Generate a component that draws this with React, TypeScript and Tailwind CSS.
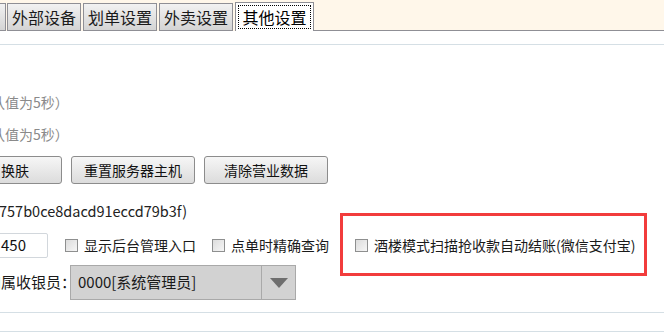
import React from 'react';

const font = { fontFamily: '"Microsoft YaHei", "Noto Sans CJK SC", "Liberation Sans", sans-serif' };

const Tab: React.FC<{ label: string; active?: boolean; className?: string }> = ({ label, active = false, className = '' }) => (
    <div
        className={`h-[28px] flex items-center justify-center text-[16px] leading-none border border-[#8f8f95] ${
            active
                ? 'h-[29px] bg-white border-b-0 text-black'
                : 'bg-gradient-to-b from-[#f2f2f2] to-[#d4d4d4] text-[#1a1a1a] mr-[2px]'
        } ${className}`}
    >
        {active ? (
            <span className="border border-dotted border-black px-[3px] py-[3px]">{label}</span>
        ) : (
            <span>{label}</span>
        )}
    </div>
);

const Button: React.FC<{ label: string; className?: string }> = ({ label, className = '' }) => (
    <button
        className={`h-[28px] rounded-[3px] border border-[#8c8c8c] bg-gradient-to-b from-[#f6f6f6] to-[#dcdcdc] text-[14px] text-[#111] flex items-center justify-center ${className}`}
    >
        {label}
    </button>
);

const Checkbox: React.FC<{ label: string }> = ({ label }) => (
    <label className="flex items-center text-[14px] text-[#1a1a1a] whitespace-nowrap">
        <span className="w-[13px] h-[13px] border border-[#8e8f8f] bg-gradient-to-br from-[#dcdcdc] to-[#f6f6f6] mr-[6px] inline-block"></span>
        <span>{label}</span>
    </label>
);

export default function App() {
    return (
        <div className="w-[664px] h-[333px] bg-white overflow-hidden relative" style={font}>
            {/* tab strip */}
            <div className="h-[31px] bg-[#fff7ea] flex items-end">
                <div className="w-[6px] h-[28px] bg-gradient-to-b from-[#f2f2f2] to-[#d4d4d4] border border-l-0 border-[#8f8f95] mr-[1px]"></div>
                <Tab label="外部设备" className="w-[74px]" />
                <Tab label="划单设置" className="w-[74px]" />
                <Tab label="外卖设置" className="w-[74px]" />
                <Tab label="其他设置" active className="w-[79px]" />
                <div className="flex-1 h-full border-b border-[#8f8f95]"></div>
            </div>

            <div className="mt-[13px] border-t border-[#d5dfe5]"></div>

            <div className="pt-[49px] text-[14px] text-[#8a8a8a] leading-[16px] ml-[-9px] whitespace-nowrap">认值为5秒）</div>
            <div className="pt-[16px] text-[14px] text-[#8a8a8a] leading-[16px] ml-[-9px] whitespace-nowrap">认值为5秒）</div>

            <div className="mt-[14px] flex gap-[9px] ml-[-40px]">
                <Button label="换肤" className="w-[102px] justify-start pl-[40px]" />
                <Button label="重置服务器主机" className="w-[124px]" />
                <Button label="清除营业数据" className="w-[124px]" />
            </div>

            <div className="mt-[17px] text-[14.5px] text-[#222] leading-[20px] ml-[-1px]">757b0ce8dacd91eccd79b3f)</div>

            <div className="mt-[12px] flex items-center ml-[-30px]">
                <div className="w-[78px] h-[25px] border border-[#d2d7dc] rounded-[2px] flex items-center pl-[30px] text-[15px] text-[#111]">450</div>
                <div className="ml-[17px]">
                    <Checkbox label="显示后台管理入口" />
                </div>
                <div className="ml-[16px]">
                    <Checkbox label="点单时精确查询" />
                </div>
                <div className="ml-[26px]">
                    <Checkbox label="酒楼模式扫描抢收款自动结账(微信支付宝)" />
                </div>
            </div>

            <div className="mt-[7px] flex items-center ml-[-14px]">
                <span className="text-[15px] text-[#1a1a1a] w-[84px] whitespace-nowrap">归属收银员：</span>
                <div className="w-[226px] h-[35px] bg-[#d2d2d2] border border-[#a9a9a9] flex">
                    <div className="flex-1 flex items-center pl-[7px] text-[15px] text-[#1a1a1a]">0000[系统管理员]</div>
                    <div className="w-[34px] border-l border-[#a9a9a9] flex items-center justify-center">
                        <svg width="20" height="12" viewBox="0 0 20 12">
                            <polygon points="1,1 19,1 10,11" fill="#6e6e6e" />
                        </svg>
                    </div>
                </div>
            </div>

            <div className="mt-[12px] border-t border-[#d5dfe5]"></div>
            <div className="mt-[18px] border-t border-[#d5dfe5]"></div>

            {/* annotation */}
            <div className="absolute left-[340px] top-[213px] w-[307px] h-[63px] border-[3px] border-[#f23c3c]"></div>
        </div>
    );
}
